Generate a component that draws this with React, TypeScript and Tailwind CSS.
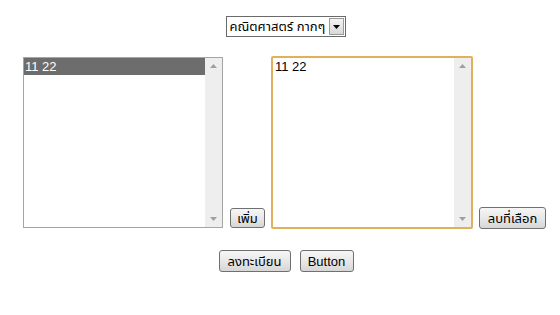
import React from 'react';

const font = { fontFamily: '"Liberation Sans", Tahoma, "Noto Sans Thai", "Noto Sans", sans-serif' };

const Btn = ({ label, className }: { label: string; className: string }) => (
  <div
    className={`flex items-center justify-center rounded-[3px] border border-[#707070] bg-gradient-to-b from-[#f6f6f6] via-[#e8e8e8] to-[#d6d6d6] text-[13px] text-black leading-none ${className}`}
  >
    {label}
  </div>
);

const Scrollbar = () => (
  <div className="flex w-[17px] flex-col items-center justify-between bg-[#eeeeee] py-[6px]">
    <svg width="7" height="4" viewBox="0 0 7 4">
      <path d="M0 4 L3.5 0 L7 4 Z" fill="#a0a0a0" />
    </svg>
    <svg width="7" height="4" viewBox="0 0 7 4">
      <path d="M0 0 L3.5 4 L7 0 Z" fill="#a0a0a0" />
    </svg>
  </div>
);

const App = () => {
  return (
    <div className="h-[315px] w-[560px] bg-white pt-[16px]" style={font}>
      <div className="flex justify-center pl-[11px]">
        <div className="flex h-[21px] w-[120px] items-center border border-[#6a6a6a] bg-white">
          <span className="flex-1 pl-[3px] text-[13px] leading-none text-black">คณิตศาสตร์ กากๆ</span>
          <div className="mr-[1px] flex h-[17px] w-[15px] items-center justify-center border border-[#9a9a9a] bg-gradient-to-b from-[#f4f4f4] to-[#d8d8d8]">
            <svg width="7" height="4" viewBox="0 0 7 4">
              <path d="M0 0 L3.5 4 L7 0 Z" fill="#000" />
            </svg>
          </div>
        </div>
      </div>

      <div className="mt-[19px] flex items-end pl-[23px]">
        <div className="mb-[1px] flex h-[171px] w-[200px] border border-[#a5a5a5] bg-white">
          <div className="flex-1">
            <div className="flex h-[17px] items-center bg-[#6d6d6d] pl-[1px] text-[13px] text-white">11 22</div>
          </div>
          <Scrollbar />
        </div>
        <Btn label="เพิ่ม" className="mb-[1px] ml-[7px] h-[20px] w-[35px]" />
        <div className="ml-[6px] flex h-[173px] w-[202px] rounded-[2px] border-2 border-[#e1b05a] bg-white">
          <div className="flex-1">
            <div className="flex h-[17px] items-center pl-[2px] text-[13px] text-black">11 22</div>
          </div>
          <Scrollbar />
        </div>
        <Btn label="ลบที่เลือก" className="ml-[6px] h-[22px] w-[67px]" />
      </div>

      <div className="mt-[21px] flex justify-center gap-[9px] pl-[12px]">
        <Btn label="ลงทะเบียน" className="h-[22px] w-[72px]" />
        <Btn label="Button" className="h-[22px] w-[54px]" />
      </div>
    </div>
  );
};

export default App;
